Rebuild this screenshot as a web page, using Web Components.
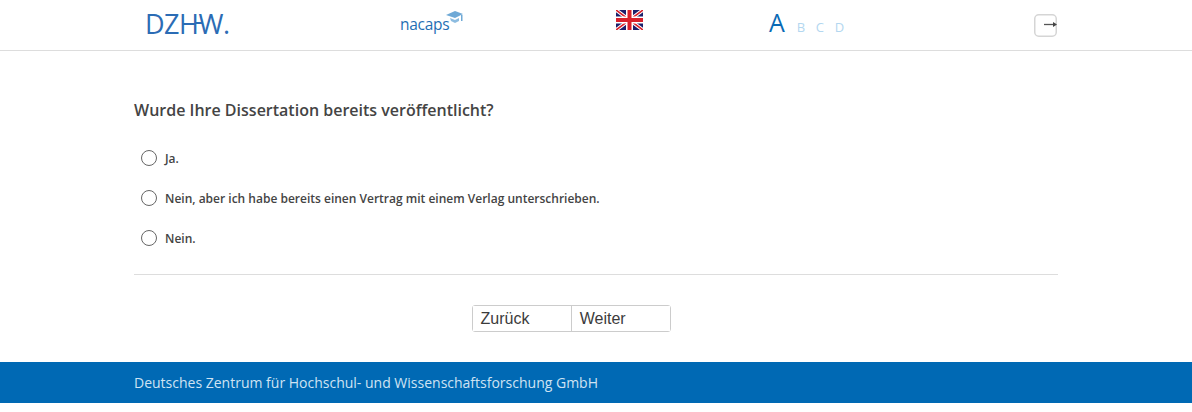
<!DOCTYPE html>
<html lang="de">
<head>
<meta charset="utf-8">
<title>Nacaps</title>
<style>
  html, body { margin: 0; padding: 0; background: #fff; }
  body { font-family: "Open Sans", sans-serif; color: #444; }
</style>
</head>
<body>
<survey-header></survey-header>
<survey-question legend="Wurde Ihre Dissertation bereits veröffentlicht?">
  <survey-option>Ja.</survey-option>
  <survey-option>Nein, aber ich habe bereits einen Vertrag mit einem Verlag unterschrieben.</survey-option>
  <survey-option>Nein.</survey-option>
</survey-question>
<survey-nav></survey-nav>
<survey-footer>Deutsches Zentrum für Hochschul- und Wissenschaftsforschung GmbH</survey-footer>

<script>
  // top bar: logos, language flag, font size switch, logout
  class SurveyHeader extends HTMLElement {
    constructor() {
      super();
      this.attachShadow({ mode: 'open' });
      this.shadowRoot.innerHTML = `
        <style>
          :host { display: block; height: 50px; border-bottom: 1px solid #ddd; }
          .bar {
            display: grid;
            grid-template-columns: 255px 216px 153px 265px 23px;
            width: 912px;
            height: 50px;
            margin-left: 145px;
            align-items: start;
          }
          .dzhw {
            margin-top: 5px;
            font: 400 27px/38px "Open Sans", sans-serif;
            letter-spacing: -0.5px;
            color: #2b6cb5;
            white-space: nowrap;
          }
          .dzhw .w { position: relative; }
          /* crossbar of the H runs on into the W */
          .dzhw .w::before { content: ""; position: absolute; left: -3px; top: 17px; width: 7px; height: 2px; background: #2b6cb5; }
          .nacaps { display: flex; margin-top: 10px; color: #1f6fb4; font: 400 15.5px/28px "Open Sans", sans-serif; letter-spacing: -0.3px; }
          .nacaps svg { margin: 1px 0 0 -3px; }
          .flag { display: block; margin-top: 10px; }
          .sizes { display: flex; align-items: baseline; margin-top: 5px; font-family: "Open Sans", sans-serif; color: #b3d7f0; font-size: 13px; line-height: 34px; }
          .sizes b { font-weight: 400; font-size: 25px; color: #0a6ab5; margin-right: 12px; }
          .sizes span { width: 19px; }
          .logout { display: block; margin-top: 14px; }
        </style>
        <div class="bar">
          <div class="dzhw">DZH<span class="w">W</span>.</div>
          <div class="nacaps">nacaps<svg width="17" height="16" viewBox="0 0 17 16">
            <path d="M0 4 L9 0 L17 3 L9 7 Z" fill="#6fa9d6"/>
            <path d="M4 7 L9 9 L13 7 L13 10 L9 12 L5 10 Z" fill="#8dbce0"/>
            <path d="M15 4 L16.5 4 L16.5 10 L15 10 Z" fill="#6fa9d6"/>
          </svg></div>
          <svg class="flag" width="27" height="20" viewBox="0 0 27 20">
            <rect width="27" height="20" fill="#1b1f6b"/>
            <path d="M0 0 L27 20 M27 0 L0 20" stroke="#fff" stroke-width="3.6"/>
            <path d="M0 0 L27 20 M27 0 L0 20" stroke="#d8202a" stroke-width="1.6"/>
            <path d="M13.5 0 V20 M0 10 H27" stroke="#fff" stroke-width="7"/>
            <path d="M13.5 0 V20 M0 10 H27" stroke="#d8202a" stroke-width="4"/>
          </svg>
          <div class="sizes"><b>A</b><span>B</span><span>C</span><span>D</span></div>
          <svg class="logout" width="24" height="24" viewBox="0 0 24 24">
            <rect x="0.75" y="0.75" width="21.5" height="21.5" rx="4" fill="#fff" stroke="#d5d5d5" stroke-width="1.5"/>
            <path d="M10 10.5 H20" stroke="#555" stroke-width="1.3"/>
            <path d="M19 8 L23 10.5 L19 13 Z" fill="#444"/>
          </svg>
        </div>
      `;
    }
  }

  class SurveyQuestion extends HTMLElement {
    constructor() {
      super();
      this.attachShadow({ mode: 'open' });
      this.shadowRoot.innerHTML = `
        <style>
          :host { display: block; margin: 0 134px; height: 223px; border-bottom: 1px solid #ddd; }
          h2 { margin: 0; padding-top: 48px; font: 600 16px/22px "Open Sans", sans-serif; color: #444; }
          .options { display: flex; flex-direction: column; padding-top: 17px; }
        </style>
        <h2></h2>
        <div class="options" role="radiogroup"><slot></slot></div>
      `;
    }

    connectedCallback() {
      this.shadowRoot.querySelector('h2').textContent = this.getAttribute('legend');
    }
  }

  class SurveyOption extends HTMLElement {
    constructor() {
      super();
      this.attachShadow({ mode: 'open' });
      this.shadowRoot.innerHTML = `
        <style>
          :host { display: flex; align-items: center; height: 40px; padding-left: 7px; font: 600 12px/16px "Open Sans", sans-serif; color: #444; }
          .radio { width: 16px; height: 16px; box-sizing: border-box; border: 1px solid #666; border-radius: 50%; margin-right: 8px; background: #fff; flex: none; }
          .text { margin-top: 2px; }
        </style>
        <span class="radio"></span>
        <span class="text"><slot></slot></span>
      `;
    }
  }

  class SurveyNav extends HTMLElement {
    constructor() {
      super();
      this.attachShadow({ mode: 'open' });
      this.shadowRoot.innerHTML = `
        <style>
          :host { display: flex; justify-content: center; padding: 30px 49px 30px 0; height: 27px; }
          .group { display: flex; width: 199px; height: 27px; box-sizing: border-box; border: 1px solid #ccc; border-radius: 3px; }
          button {
            flex: 1;
            background: #fff;
            border: 0;
            padding: 0 0 0 8px;
            text-align: left;
            font: 400 16px/25px "Liberation Sans", Arial, sans-serif;
            color: #3c3c3c;
          }
          button:first-child { padding-left: 7.5px; }
          button + button { border-left: 1px solid #ccc; }
        </style>
        <div class="group"><button>Zurück</button><button>Weiter</button></div>
      `;
    }
  }

  class SurveyFooter extends HTMLElement {
    constructor() {
      super();
      this.attachShadow({ mode: 'open' });
      this.shadowRoot.innerHTML = `
        <style>
          :host { display: block; height: 41px; background: #0069b4; color: #cfe3f3; padding-left: 134px; font: 400 14px/41px "Open Sans", sans-serif; }
        </style>
        <slot></slot>
      `;
    }
  }

  customElements.define('survey-header', SurveyHeader);
  customElements.define('survey-question', SurveyQuestion);
  customElements.define('survey-option', SurveyOption);
  customElements.define('survey-nav', SurveyNav);
  customElements.define('survey-footer', SurveyFooter);
</script>
</body>
</html>
